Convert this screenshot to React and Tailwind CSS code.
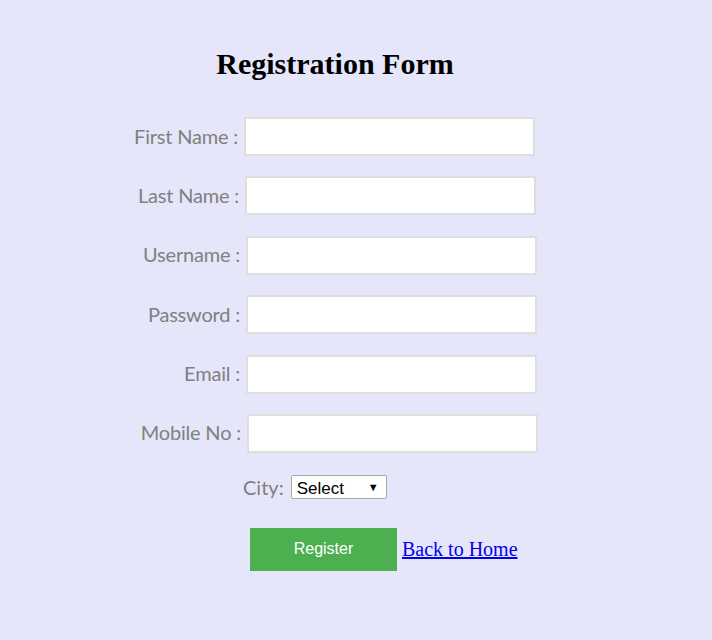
const fields = [
  { label: "First Name :", type: "text", width: "w-[238px]" },
  { label: "Last Name :", type: "text", width: "w-[239px]" },
  { label: "Username :", type: "text", width: "w-[240px]" },
  { label: "Password :", type: "password", width: "w-[240px]" },
  { label: "Email :", type: "email", width: "w-[240px]" },
  { label: "Mobile No :", type: "text", width: "w-[241px]" },
]

const App = () => {
  return (
    <div className="min-h-[640px] w-full bg-[#e6e6fa]">
      <div className="w-[670px] pt-[47px]">
        <h2 className="text-center font-['Liberation_Serif',serif] text-[30px] font-bold leading-[34px] text-black">
          Registration Form
        </h2>
        <form className="mt-[36px] flex flex-col gap-[20.4px]" onSubmit={(e) => e.preventDefault()}>
          {fields.map((f) => (
            <div key={f.label} className="flex items-center">
              <label className={`${f.width} pb-[2px] text-right font-['Lato',sans-serif] text-[20px] tracking-[-0.2px] text-[#808080]`}>
                {f.label}
              </label>
              <input
                type={f.type}
                className="ml-[6px] h-[39px] w-[291px] border-2 border-[#dedede] bg-white px-2 outline-none"
              />
            </div>
          ))}
          <div className="-mt-[1px] flex items-center pl-[243px]">
            <label className="mr-[7px] font-['Lato',sans-serif] text-[20px] text-[#808080]">City:</label>
            <div className="relative h-[24px] w-[96px] rounded-[2px] border border-[#a9a9a9] bg-white">
              <select className="h-full w-full appearance-none bg-transparent pl-[5px] font-['Liberation_Sans',sans-serif] text-[17px] text-black outline-none">
                <option>Select</option>
              </select>
              <span className="pointer-events-none absolute right-[7px] top-[3px] font-['Liberation_Sans',sans-serif] text-[11px] text-black">
                ▼
              </span>
            </div>
          </div>
          <div className="mt-[5px] flex items-center pl-[250px]">
            <button
              type="submit"
              className="h-[43px] w-[147px] bg-[#4caf50] font-['Liberation_Sans',sans-serif] text-[16px] text-white"
            >
              Register
            </button>
            <a href="#" className="ml-[5px] font-['Liberation_Serif',serif] text-[20px] text-[#0000ee] underline">
              Back to Home
            </a>
          </div>
        </form>
      </div>
    </div>
  )
}

export default App
